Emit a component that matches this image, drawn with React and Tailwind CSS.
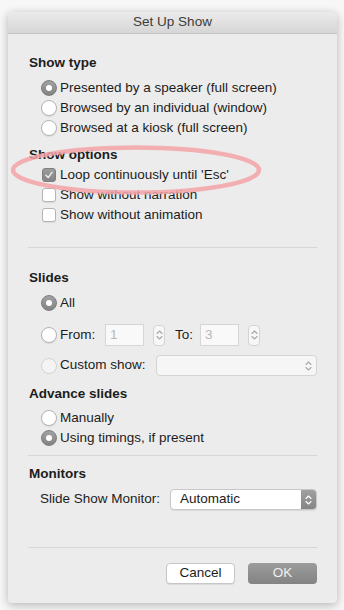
import React from 'react';

const font = { fontFamily: '"Liberation Sans", Arial, sans-serif' };

function Radio({ checked, disabled, label, labelWidth }) {
  let circle = 'bg-white border border-[#b4b4b4] shadow-[0_1px_1px_rgba(0,0,0,0.08)]';
  if (checked) circle = 'bg-gradient-to-b from-[#a2a2a2] to-[#838383] border border-[#7d7d7d]';
  if (disabled) circle = 'bg-[#f4f4f4] border border-[#d2d2d2]';
  return (
    <div className="flex items-center h-[20px] pl-[13px] shrink-0">
      <span className={`w-[16px] h-[16px] rounded-full flex items-center justify-center shrink-0 ${circle}`}>
        {checked && <span className="w-[6px] h-[6px] rounded-full bg-white" />}
      </span>
      <span className="ml-[3px] whitespace-nowrap" style={labelWidth ? { width: labelWidth } : undefined}>
        {label}
      </span>
    </div>
  );
}

function Checkbox({ checked, label }) {
  return (
    <div className="flex items-center h-[20px] pl-[14px]">
      <span
        className={`w-[14px] h-[14px] rounded-[3px] flex items-center justify-center shrink-0 ${
          checked
            ? 'bg-gradient-to-b from-[#9c9c9c] to-[#858585] border border-[#7f7f7f]'
            : 'bg-white border border-[#b4b4b4] shadow-[0_1px_1px_rgba(0,0,0,0.08)]'
        }`}
      >
        {checked && (
          <svg className="w-[10px] h-[10px]" viewBox="0 0 10 10" fill="none">
            <path d="M2 5.2 L4.2 7.6 L8.2 2.2" stroke="#f2f2f2" strokeWidth="1.4" strokeLinecap="round" strokeLinejoin="round" />
          </svg>
        )}
      </span>
      <span className="ml-[4px]">{label}</span>
    </div>
  );
}

function Chevrons({ color = '#9a9a9a' }) {
  return (
    <svg className="w-[7px] h-[12px]" viewBox="0 0 7 12" fill="none">
      <path d="M1 4.5 L3.5 2 L6 4.5" stroke={color} strokeWidth="1.1" strokeLinecap="round" strokeLinejoin="round" />
      <path d="M1 7.5 L3.5 10 L6 7.5" stroke={color} strokeWidth="1.1" strokeLinecap="round" strokeLinejoin="round" />
    </svg>
  );
}

function Stepper() {
  return (
    <span className="w-[12px] h-[21px] rounded-[4px] border border-[#d4d4d4] bg-[#f7f7f7] flex items-center justify-center shrink-0">
      <Chevrons color="#a8a8a8" />
    </span>
  );
}

function NumInput({ value }) {
  return (
    <span className="w-[39px] h-[22px] border border-[#d6d6d6] bg-[#f9f9f9] text-[#b8b8b8] flex items-center pl-[4px] shrink-0">
      {value}
    </span>
  );
}

function Heading({ children, className = '' }) {
  return <div className={`font-bold h-[16px] leading-[16px] ${className}`}>{children}</div>;
}

export default function App() {
  return (
    <div className="w-[344px] h-[610px] bg-[#f7f7f7] pt-[12px] pl-[8px] text-[13.5px] text-[#1c1c1c]" style={font}>
      <div className="relative w-[329px] h-[591px] bg-[#ececec] rounded-t-[5px] rounded-b-[4px] shadow-[0_2px_10px_rgba(0,0,0,0.28)] flex flex-col">
        <div className="h-[22px] rounded-t-[5px] bg-gradient-to-b from-[#ebebeb] to-[#d6d6d6] border-b border-[#c2c2c2] flex items-center justify-center text-[#3c3c3c] shrink-0">
          Set Up Show
        </div>

        <div className="pl-[21px] pr-[20px] pt-[21px] flex flex-col">
          <Heading>Show type</Heading>
          <div className="mt-[7px] -ml-[1px]">
            <Radio checked label="Presented by a speaker (full screen)" />
            <Radio label="Browsed by an individual (window)" />
            <Radio label="Browsed at a kiosk (full screen)" />
          </div>

          <Heading className="mt-[9px]">Show options</Heading>
          <div className="mt-[2px] -ml-[1px]">
            <Checkbox checked label="Loop continuously until 'Esc'" />
            <Checkbox label="Show without narration" />
            <Checkbox label="Show without animation" />
          </div>

          <div className="mt-[22px] -ml-[1px] h-px bg-[#d6d6d6]" />

          <Heading className="mt-[22px]">Slides</Heading>
          <div className="mt-[7px] -ml-[1px]">
            <Radio checked label="All" />
          </div>
          <div className="mt-[11px] -ml-[1px] flex items-center h-[22px]">
            <Radio label="From:" labelWidth={45} />
            <NumInput value="1" />
            <span className="ml-[9px]"><Stepper /></span>
            <span className="ml-[10px]">To:</span>
            <span className="ml-[7px]"><NumInput value="3" /></span>
            <span className="ml-[9px]"><Stepper /></span>
          </div>
          <div className="mt-[9px] -ml-[1px] flex items-center h-[21px]">
            <Radio disabled label="Custom show:" labelWidth={96} />
            <span className="flex-1 h-[21px] rounded-[4px] border border-[#d4d4d4] bg-[#f6f6f6] flex items-center justify-end pr-[4px]">
              <Chevrons color="#a8a8a8" />
            </span>
          </div>

          <Heading className="mt-[10px]">Advance slides</Heading>
          <div className="mt-[6px] -ml-[1px]">
            <Radio label="Manually" />
            <Radio checked label="Using timings, if present" />
          </div>

          <div className="mt-[7px] -ml-[1px] h-px bg-[#d6d6d6]" />

          <Heading className="mt-[10px]">Monitors</Heading>
          <div className="mt-[7px] flex items-center h-[21px] pl-[11px]">
            <span className="w-[130px] whitespace-nowrap shrink-0">Slide Show Monitor:</span>
            <span className="flex-1 h-[21px] rounded-[4px] border border-[#c8c8c8] bg-white flex items-stretch overflow-hidden shadow-[0_1px_1px_rgba(0,0,0,0.08)]">
              <span className="flex-1 flex items-center pl-[9px]">Automatic</span>
              <span className="w-[15px] bg-gradient-to-b from-[#a0a0a0] to-[#858585] flex items-center justify-center">
                <Chevrons color="#ffffff" />
              </span>
            </span>
          </div>

          <div className="mt-[37px] -ml-[1px] h-px bg-[#d6d6d6]" />

          <div className="mt-[15px] flex justify-end gap-[13px]">
            <span className="w-[69px] h-[21px] rounded-[4px] border border-[#c6c6c6] bg-white flex items-center justify-center shadow-[0_1px_1px_rgba(0,0,0,0.08)]">
              Cancel
            </span>
            <span className="w-[69px] h-[21px] rounded-[4px] bg-gradient-to-b from-[#9c9c9c] to-[#838383] text-[#f0f0f0] flex items-center justify-center">
              OK
            </span>
          </div>
        </div>

        <svg className="absolute left-[2px] top-[133px] pointer-events-none" width="252" height="52" viewBox="0 0 252 52">
          <ellipse cx="126" cy="25" rx="123" ry="22.5" fill="none" stroke="#f5a3a8" strokeOpacity="0.85" strokeWidth="4.5" />
        </svg>
      </div>
    </div>
  );
}
